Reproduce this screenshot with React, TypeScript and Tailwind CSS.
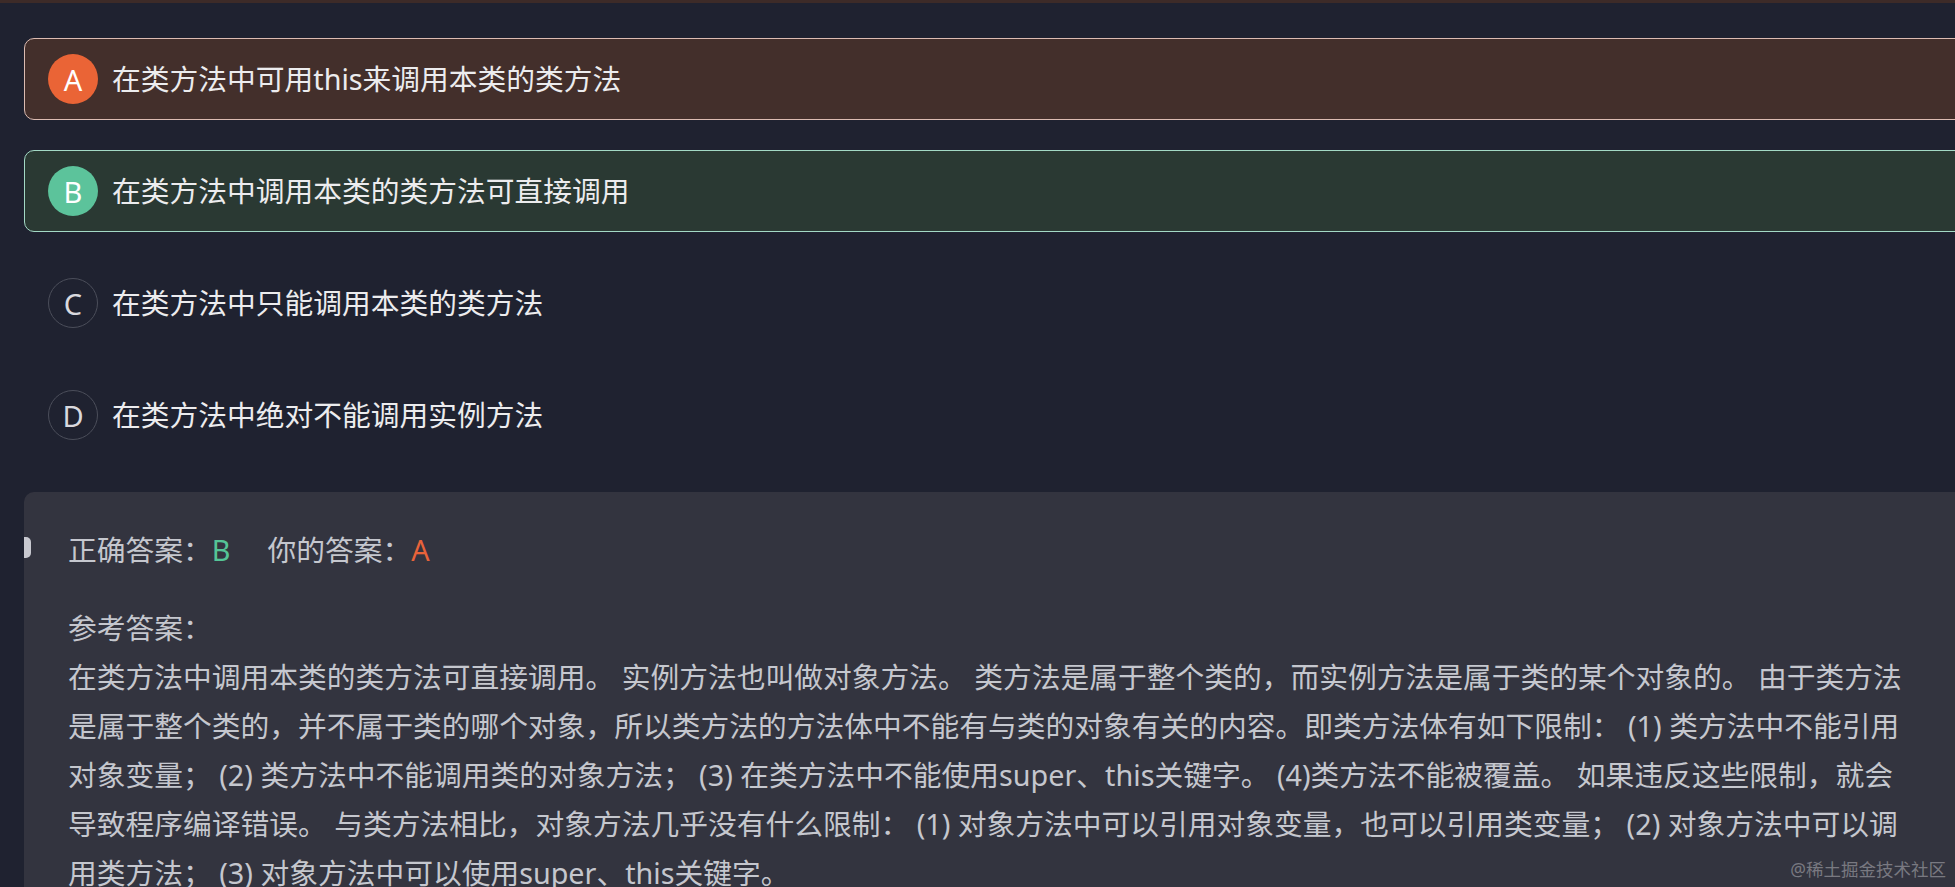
import React from "react";

type OptionState = "wrong" | "right" | "none";

const options: { key: string; text: string; state: OptionState }[] = [
  { key: "A", text: "在类方法中可用this来调用本类的类方法", state: "wrong" },
  { key: "B", text: "在类方法中调用本类的类方法可直接调用", state: "right" },
  { key: "C", text: "在类方法中只能调用本类的类方法", state: "none" },
  { key: "D", text: "在类方法中绝对不能调用实例方法", state: "none" },
];

const rowStyles: Record<OptionState, string> = {
  wrong: "border-[#dcbcb2] bg-[#432f2b]",
  right: "border-[#a3d9c5] bg-[#2a3933]",
  none: "border-transparent",
};

const badgeStyles: Record<OptionState, string> = {
  wrong: "bg-[#ea6436] text-white",
  right: "bg-[#5cc39b] text-white",
  none: "border border-[#4b4e5a] text-[#d9d9de]",
};

const explanation =
  "在类方法中调用本类的类方法可直接调用。 实例方法也叫做对象方法。 类方法是属于整个类的，而实例方法是属于类的某个对象的。 由于类方法是属于整个类的，并不属于类的哪个对象，所以类方法的方法体中不能有与类的对象有关的内容。即类方法体有如下限制： (1) 类方法中不能引用对象变量； (2) 类方法中不能调用类的对象方法； (3) 在类方法中不能使用super、this关键字。 (4)类方法不能被覆盖。 如果违反这些限制，就会导致程序编译错误。 与类方法相比，对象方法几乎没有什么限制： (1) 对象方法中可以引用对象变量，也可以引用类变量； (2) 对象方法中可以调用类方法； (3) 对象方法中可以使用super、this关键字。";

function OptionRow({ letter, text, state }: { letter: string; text: string; state: OptionState }) {
  return (
    <div className={`flex h-[82px] items-center gap-[14px] rounded-[10px] border pl-[23px] ${rowStyles[state]}`}>
      <div
        className={`flex h-[50px] w-[50px] shrink-0 items-center justify-center rounded-full text-[29px] leading-none ${badgeStyles[state]}`}
      >
        {letter}
      </div>
      <span className="text-[28.75px] leading-none text-[#ececee]">{text}</span>
    </div>
  );
}

export default function App() {
  return (
    <div className="relative h-[887px] w-full overflow-hidden bg-[#1f2230] font-['Noto_Sans','Noto_Sans_CJK_SC',sans-serif]">
      {/* bottom edge of the previous block */}
      <div className="h-[3px] bg-[#3d2b28]" />

      <div className="w-[1980px] pl-[24px] pt-[35px]">
        {/* Options */}
        <div className="flex flex-col gap-[30px]">
          {options.map((o) => (
            <OptionRow key={o.key} letter={o.key} text={o.text} state={o.state} />
          ))}
        </div>

        {/* Answer panel */}
        <div className="relative mt-[36px] rounded-[10px] bg-[#33343f] pb-[60px] pl-[44px] pr-[67px] pt-[33px] text-[28.75px] leading-[49px] text-[#c5c7ce]">
          <div className="absolute left-0 top-[45px] h-[21px] w-[7px] rounded-r-[5px] bg-[#c8c9d0]" />

          <div className="flex items-center">
            <span>正确答案：</span>
            <span className="text-[#55c497]">B</span>
            <span className="ml-[37px]">你的答案：</span>
            <span className="text-[#e8633a]">A</span>
          </div>

          <p className="mt-[29px]">
            参考答案：
            <br />
            {explanation}
          </p>
        </div>
      </div>

      <div className="absolute bottom-[6px] right-[9px] text-[17.5px] leading-[24px] text-white/35">
        @稀土掘金技术社区
      </div>
    </div>
  );
}
